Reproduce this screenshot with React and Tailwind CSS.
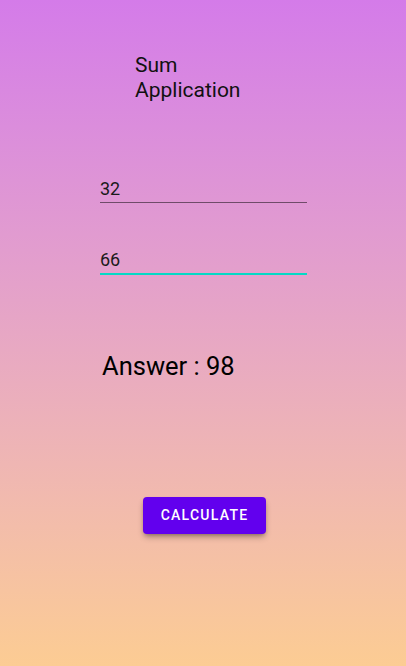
export default function App() {
    return (
        <div
            className="h-[666px] w-full flex flex-col bg-gradient-to-b from-[#d47be9] to-[#fccc93] text-[#111]"
            style={{ fontFamily: 'Roboto, "Noto Sans", sans-serif' }}
        >
            {/* title */}
            <div className="mt-[53px] ml-[135px] text-[21px] leading-[25px]">
                <div>Sum</div>
                <div>Application</div>
            </div>

            {/* number fields */}
            <div className="ml-[100px] w-[207px] mt-[74px] flex flex-col">
                <div className="text-[18px] leading-[24px] pb-[1px] border-b border-black/50 text-[#1a1a1a]">
                    32
                </div>
                <div className="mt-[45px] text-[18px] leading-[24px] pb-[1px] border-b-2 border-[#03dac5] text-[#1a1a1a]">
                    66
                </div>
            </div>

            {/* result */}
            <div className="mt-[76px] ml-[102px] text-[25.5px] leading-[30px] text-black">
                Answer : 98
            </div>

            {/* action */}
            <div className="mt-[116px] ml-[143px]">
                <button className="w-[123px] h-[37px] rounded bg-[#6200ee] text-white text-[14px] font-medium tracking-[1.25px] uppercase shadow-md shadow-black/30">
                    Calculate
                </button>
            </div>
        </div>
    )
}
